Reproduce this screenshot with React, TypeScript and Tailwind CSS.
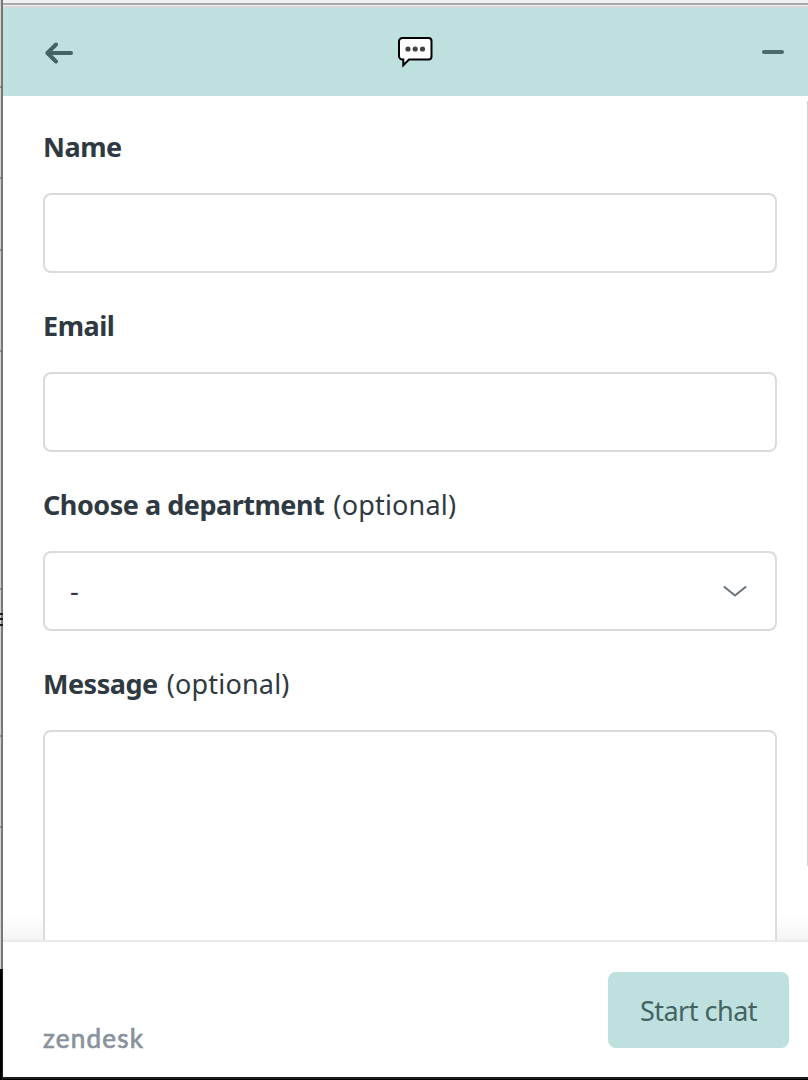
import { useState } from 'react';

// y offsets of the table rows that show along the left edge
const edgeMarks = ['top-[86px]', 'top-[177px]', 'top-[249px]', 'top-[350px]', 'top-[588px]', 'top-[735px]', 'top-[826px]'];

const fieldClass = 'h-20 shrink-0 w-full rounded-lg border-2 border-[#d8dcde] bg-white text-[27px] outline-none';

function PageEdge() {
  return (
    <div className="relative w-[3px] shrink-0 flex flex-col">
      <div className="h-[969px] bg-[#d4d4d6] border-r-2 border-[#777777]"></div>
      <div className="flex-1 bg-black border-r border-[#1d1d1d]"></div>
      {edgeMarks.map((top) => (
        <span key={top} className={`absolute left-0 w-[3px] h-[2px] bg-[#6b6b6b]/60 ${top}`}></span>
      ))}
      <span className="absolute left-0 top-[613px] w-[3px] h-[2px] bg-[#1c1c28]"></span>
      <span className="absolute left-0 top-[618px] w-[3px] h-[2px] bg-[#1c1c28]"></span>
      <span className="absolute left-0 top-[624px] w-[3px] h-[2px] bg-[#1c1c28]"></span>
    </div>
  );
}

function Header() {
  return (
    <header className="h-[88px] shrink-0 bg-[#bee0de] flex items-center justify-between pl-[41px] pr-6">
      <button aria-label="Back">
        <svg className="w-[30px] h-6 block" viewBox="0 0 30 24" fill="none" stroke="#436462" strokeWidth="4" strokeLinecap="round" strokeLinejoin="round">
          <path d="M12 4.500 3.400 13 12 21.500M4 13h23" />
        </svg>
      </button>
      <svg className="w-9 h-8 -ml-[7px]" viewBox="0 0 36 32" fill="none">
        <path d="M5.500 2h26a3 3 0 0 1 3 3v15.500a3 3 0 0 1-3 3H12L6.300 29.300v-5.800H5.500a3.500 3.500 0 0 1-3.500-3.500V5.500A3.500 3.500 0 0 1 5.500 2Z" fill="white" stroke="black" strokeWidth="2" />
        <circle cx="11" cy="13" r="2.600" fill="#424242" />
        <circle cx="18.200" cy="13" r="2.600" fill="#424242" />
        <circle cx="25.500" cy="13" r="2.600" fill="#424242" />
      </svg>
      <button aria-label="Minimize" className="w-[22px] h-1 rounded-full bg-[#4a6b69]"></button>
    </header>
  );
}

function Label({ text, optional }: { text: string; optional?: boolean }) {
  return (
    <label className="block h-10 leading-10 whitespace-nowrap text-[27px]">
      <span className="font-bold tracking-[-0.48px]">{text}</span>
      {optional && <span className="ml-[9px] tracking-[0.2px]">(optional)</span>}
    </label>
  );
}

export default function App() {
  const [name, setName] = useState('');
  const [email, setEmail] = useState('');
  const [message, setMessage] = useState('');

  return (
    <div className="w-[808px] h-[1080px] flex overflow-hidden bg-white text-[#2f3941] font-['Noto_Sans',sans-serif]">
      <PageEdge />
      <div className="flex-1 min-w-0 flex flex-col">
        <div className="h-2 shrink-0 flex flex-col">
          <div className="h-[3px] bg-[#f0f0f2]"></div>
          <div className="h-[2px] bg-[#a9a9ac]"></div>
          <div className="h-px bg-[#eeeeef]"></div>
          <div className="h-[2px] bg-[#d5d9dc]"></div>
        </div>
        <Header />

        <main className="relative h-[844px] shrink-0 overflow-hidden pl-10 pt-[31px] pr-[31px]">
          <div className="absolute bottom-0 left-0 right-0 h-6 bg-gradient-to-t from-[#f4f4f4] to-white"></div>
          <div className="absolute right-0 top-[5px] w-px h-[765px] bg-[#d3d3d3]"></div>
          <div className="relative flex flex-col gap-[33px]">
            <div className="flex flex-col gap-[26px]">
              <Label text="Name" />
              <input value={name} onChange={(e) => setName(e.target.value)} className={`${fieldClass} px-6`} />
            </div>
            <div className="flex flex-col gap-[26px]">
              <Label text="Email" />
              <input value={email} onChange={(e) => setEmail(e.target.value)} className={`${fieldClass} px-6`} />
            </div>
            <div className="flex flex-col gap-[26px]">
              <Label text="Choose a department" optional />
              <button className={`${fieldClass} pl-[25px] pr-[28px] flex items-center justify-between`}>
                <span>-</span>
                <svg className="w-6 h-3" viewBox="0 0 24 12" fill="none" stroke="#68737d" strokeWidth="2" strokeLinecap="round" strokeLinejoin="round">
                  <path d="M1.500 2 12 10.500 22.500 2" />
                </svg>
              </button>
            </div>
            <div className="flex flex-col gap-[26px]">
              <Label text="Message" optional />
              <textarea value={message} onChange={(e) => setMessage(e.target.value)} className="block h-[240px] shrink-0 w-full resize-none rounded-lg border-2 border-[#d8dcde] bg-white px-6 py-5 text-[27px] outline-none" />
            </div>
          </div>
        </main>

        <footer className="h-[137px] shrink-0 border-t-2 border-[#e9ebeb] flex justify-between pl-10 pr-[19px]">
          <span className="mt-[78px] h-9 leading-9 font-[Lato] text-[26px] tracking-[1.25px] text-[#87929d] [-webkit-text-stroke:0.7px_#87929d]">zendesk</span>
          <button className="mt-[30px] w-[181px] h-[76px] rounded-lg bg-[#bee0de] text-[#436462] text-[27px] tracking-[-0.5px] pt-[2px]">Start chat</button>
        </footer>
        <div className="h-[3px] shrink-0 bg-black border-t-2 border-[#1d1d1d]"></div>
      </div>
    </div>
  );
}
